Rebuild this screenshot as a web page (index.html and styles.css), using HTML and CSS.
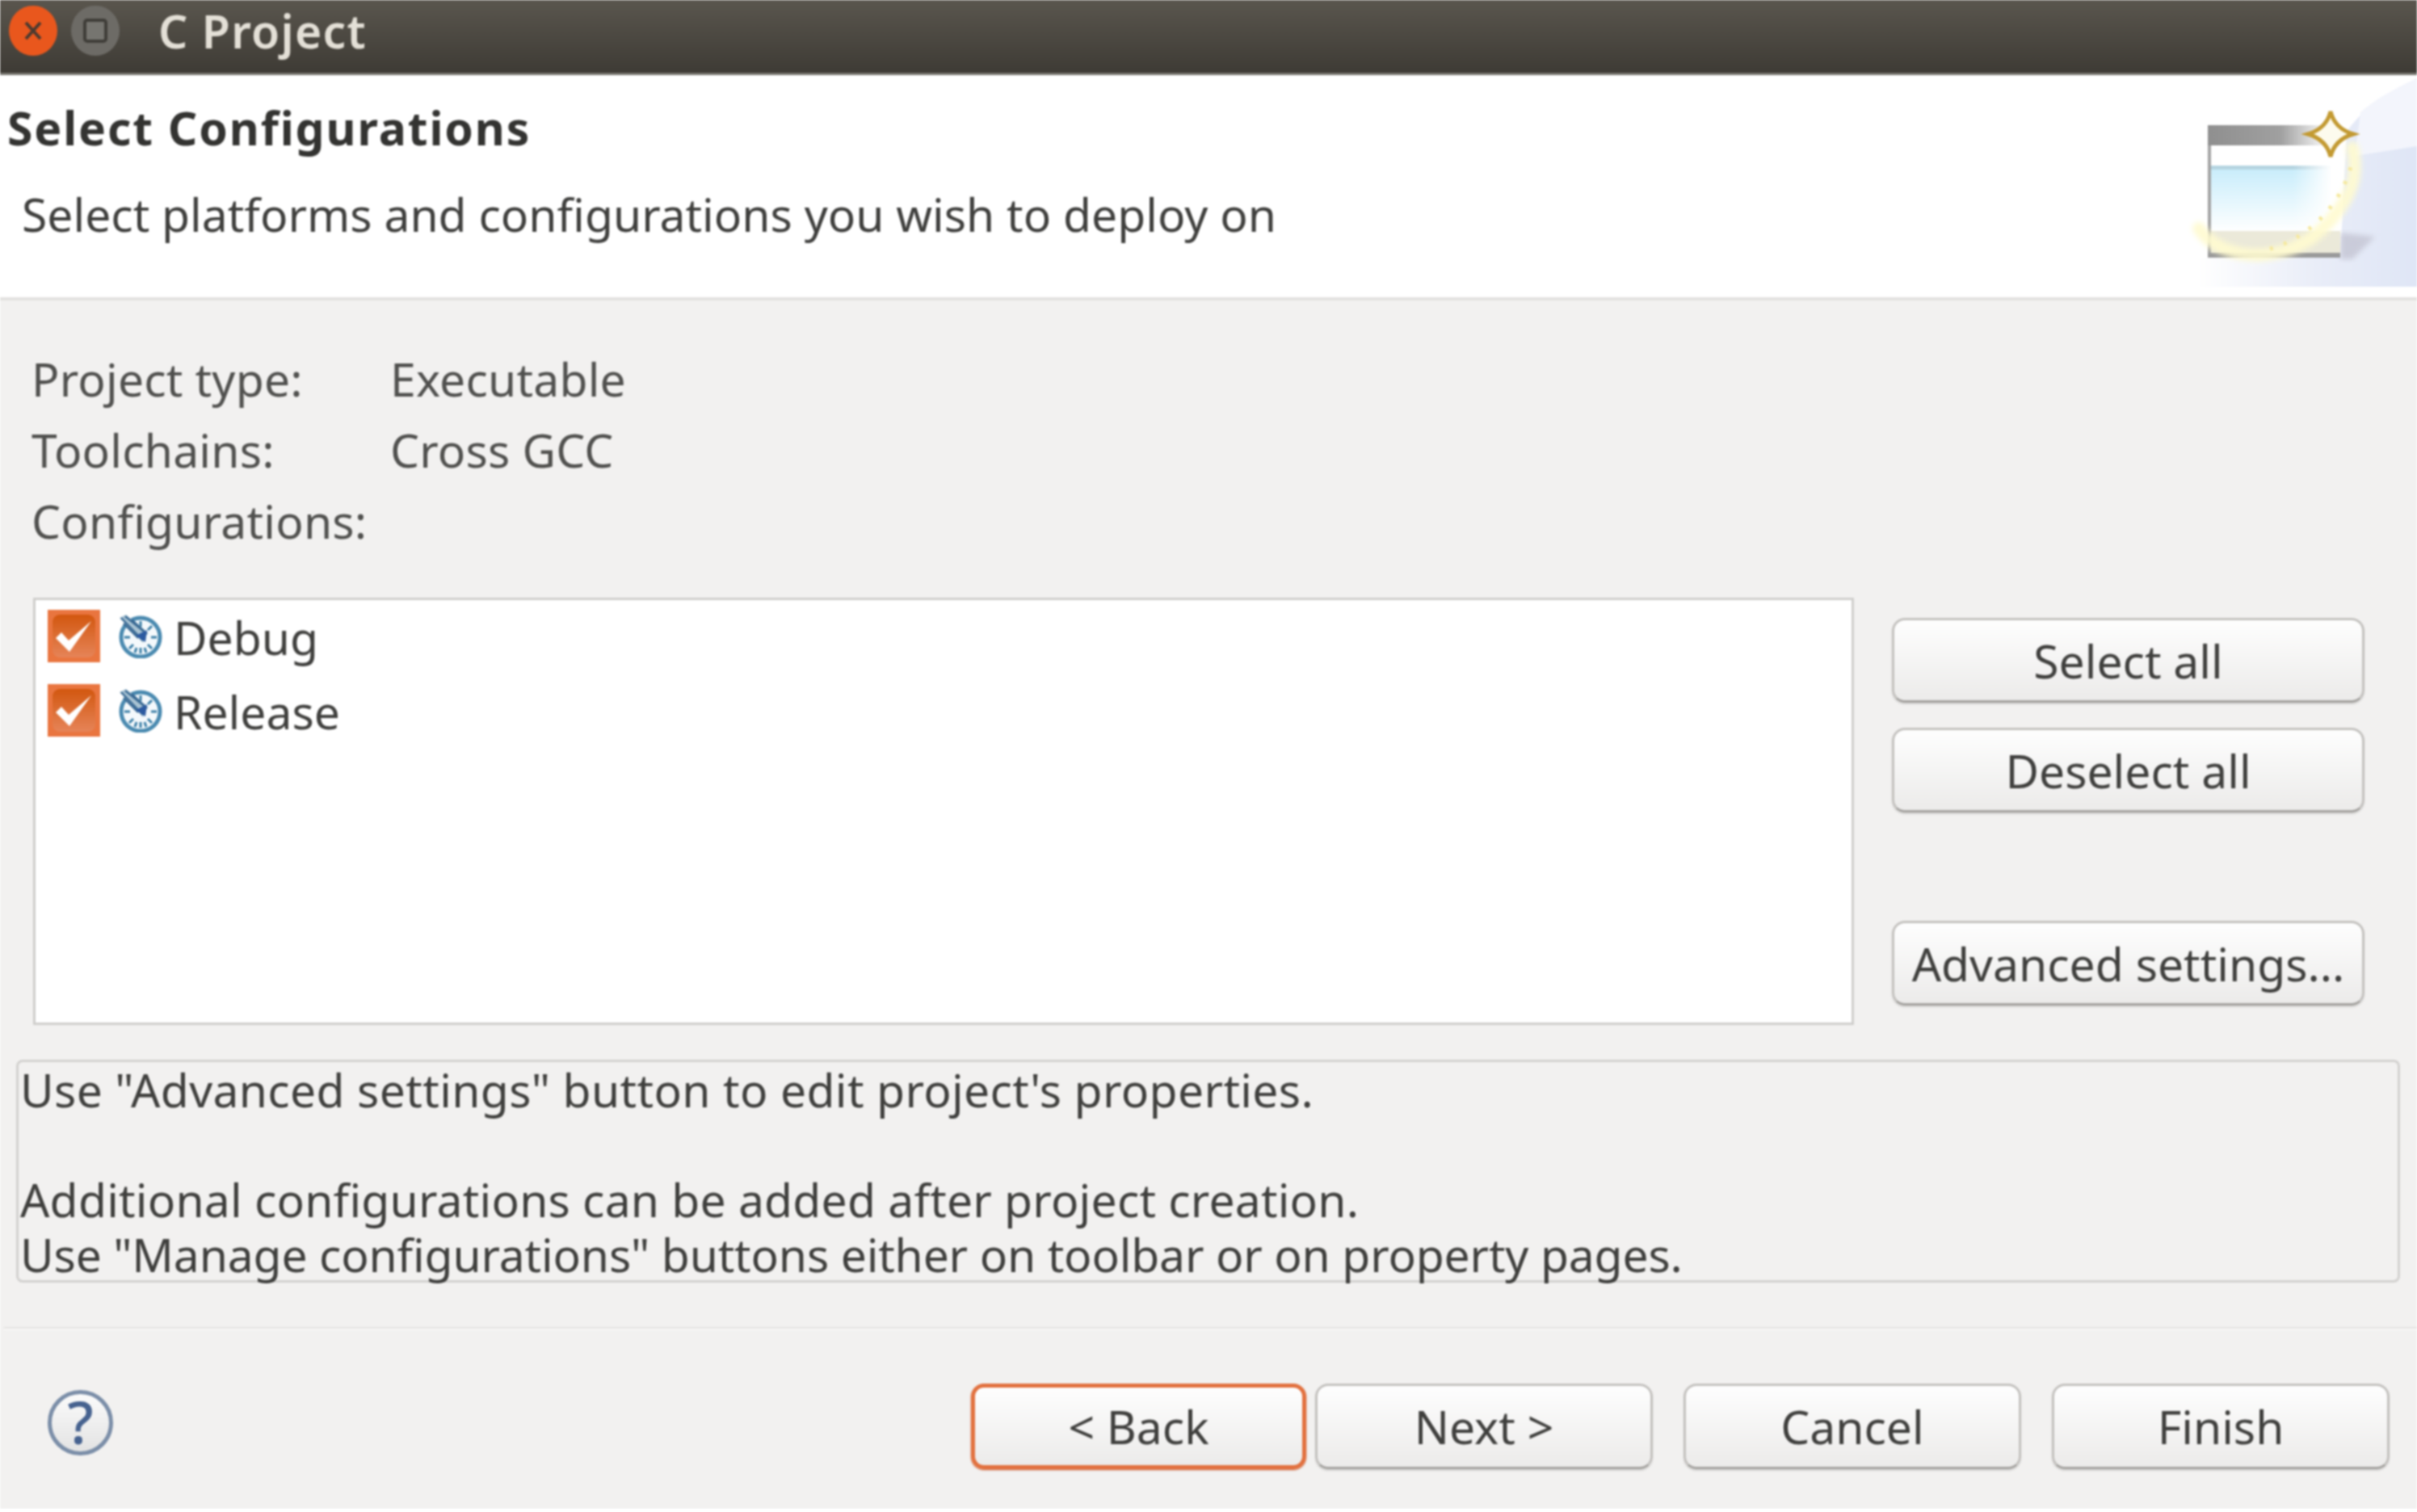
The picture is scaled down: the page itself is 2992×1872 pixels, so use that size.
FILE: index.html
```html
<!DOCTYPE html>
<html lang="en">
<head>
  <meta charset="UTF-8" />
  <title>C Project</title>
  <link rel="stylesheet" href="styles.css">
</head>
<body>
  <svg class="defs" width="0" height="0">
    <symbol id="configIcon" viewBox="0 0 54 54">
      <circle cx="27" cy="28" r="24" fill="#f4f9fc" stroke="#4a8ab0" stroke-width="5"/>
      <path d="M27 8v7M27 41v7M7 28h7M40 28h7M41 14l-5 5M13 42l5-5M41 42l-5-5M20 47l2-6M34 47l-2-6" stroke="#3a7ea6" stroke-width="3"/>
      <path d="M1 4L9 0L36 22L30 35Z" fill="#a9c3d3"/>
      <path d="M3 4L30 32M8 2L35 24M6 11L24 29M16 6L33 22" stroke="#3a6a94" stroke-width="2.4" fill="none"/>
      <path d="M21 26L35 19L33 34Z" fill="#2c5aa0"/>
    </symbol>
    <symbol id="checkIcon" viewBox="0 0 65 65">
      <rect width="65" height="65" fill="#e9753f"/>
      <rect x="6" y="6" width="53" height="53" rx="9" fill="url(#checkFill)"/>
      <path d="M10 35L17 28L26 38L54 14L27 52Z" fill="#fff"/>
    </symbol>
    <linearGradient id="checkFill" x1="0" y1="0" x2="0" y2="1">
      <stop offset="0" stop-color="#d2570f"/>
      <stop offset="1" stop-color="#e68458"/>
    </linearGradient>
  </svg>

  <div class="window">
    <div class="titlebar">
      <svg class="win-btn close" width="60" height="62" viewBox="0 0 60 62">
        <ellipse cx="30" cy="31" rx="30" ry="31" fill="#e9571d"/>
        <path d="M21 21L39 41M39 21L21 41" stroke="#4a3a30" stroke-width="4"/>
      </svg>
      <svg class="win-btn" width="60" height="62" viewBox="0 0 60 62">
        <ellipse cx="30" cy="31" rx="30" ry="31" fill="#6d6b66"/>
        <rect x="17" y="18" width="26" height="26" rx="3" fill="#767570" stroke="#3f3d38" stroke-width="4"/>
      </svg>
      <span class="title">C Project</span>
    </div>

    <div class="banner">
      <div class="banner-text">
        <h2>Select Configurations</h2>
        <p>Select platforms and configurations you wish to deploy on</p>
      </div>
      <svg class="wizard" width="292" height="275" viewBox="0 0 292 275">
        <defs>
          <linearGradient id="sky" x1="0" y1="0" x2="1" y2="0">
            <stop offset="0" stop-color="#fff"/>
            <stop offset="0.55" stop-color="#e9edf8"/>
            <stop offset="1" stop-color="#dfe6f6"/>
          </linearGradient>
          <linearGradient id="winTop" x1="0" y1="0" x2="1" y2="0">
            <stop offset="0" stop-color="#8f8f8f"/>
            <stop offset="0.6" stop-color="#a0a0a0"/>
            <stop offset="1" stop-color="#fff"/>
          </linearGradient>
          <linearGradient id="winBlue" x1="0" y1="0" x2="0" y2="1">
            <stop offset="0" stop-color="#c6ecfb"/>
            <stop offset="1" stop-color="#fff"/>
          </linearGradient>
          <linearGradient id="winFade" x1="0" y1="0" x2="1" y2="0">
            <stop offset="0.65" stop-color="#fff" stop-opacity="0"/>
            <stop offset="0.95" stop-color="#fff"/>
          </linearGradient>
          <filter id="soft"><feGaussianBlur stdDeviation="3"/></filter>
        </defs>
        <path d="M292 4C250 24 225 42 205 70L197 226H20V262H292Z" fill="url(#sky)"/>
        <path d="M292 4C262 18 240 30 222 46L215 100L292 88Z" fill="#f3f5fc"/>
        <path d="M197 195L240 200L212 228H197Z" fill="#bfbfce" opacity="0.7" filter="url(#soft)"/>
        <rect x="33" y="62" width="164" height="164" fill="#fff"/>
        <rect x="33" y="62" width="150" height="25" fill="url(#winTop)"/>
        <rect x="36" y="112" width="158" height="82" fill="url(#winBlue)"/>
        <rect x="36" y="112" width="158" height="5" fill="#a9c4d0" opacity="0.6"/>
        <rect x="36" y="112" width="158" height="82" fill="url(#winFade)"/>
        <rect x="36" y="193" width="161" height="28" fill="#ebe9d9"/>
        <rect x="33" y="87" width="4" height="139" fill="#a3a3a3"/>
        <rect x="33" y="220" width="164" height="6" fill="#9a9a9a"/>
        <path d="M22 190C50 232 130 235 175 190C205 160 222 130 212 90" fill="none" stroke="#fffbd0" stroke-width="16" stroke-linecap="round" opacity="0.9" filter="url(#soft)"/>
        <path d="M110 215C150 205 200 165 212 105" fill="none" stroke="#f6e9a0" stroke-width="5" stroke-dasharray="4 14"/>
        <path d="M185 45Q190 66 213 73Q190 80 185 101Q180 80 157 73Q180 66 185 45Z" fill="#fdfbee" stroke="#c39a32" stroke-width="5"/>
      </svg>
    </div>

    <div class="content">
      <div class="info">
        <span>Project type:</span><span>Executable</span>
        <span>Toolchains:</span><span>Cross GCC</span>
        <span>Configurations:</span><span></span>
      </div>

      <div class="config-row">
        <div class="config-list">
          <div class="config-item">
            <svg class="check" width="65" height="65"><use href="#checkIcon"/></svg>
            <svg class="cfg-icon" width="54" height="54"><use href="#configIcon"/></svg>
            <span class="cfg-name">Debug</span>
          </div>
          <div class="config-item">
            <svg class="check" width="65" height="65"><use href="#checkIcon"/></svg>
            <svg class="cfg-icon" width="54" height="54"><use href="#configIcon"/></svg>
            <span class="cfg-name">Release</span>
          </div>
        </div>
        <div class="side-buttons">
          <button>Select all</button>
          <button>Deselect all</button>
          <button class="advanced">Advanced settings...</button>
        </div>
      </div>

      <div class="note">
        <div class="line-1">Use "Advanced settings" button to edit project's properties.</div>
        <div class="line-2">Additional configurations can be added after project creation.</div>
        <div class="line-3">Use "Manage configurations" buttons either on toolbar or on property pages.</div>
      </div>

      <div class="separator"></div>

      <div class="footer">
        <div class="help">?</div>
        <div class="nav">
          <button class="back">&lt; Back</button>
          <button class="next">Next &gt;</button>
          <button>Cancel</button>
          <button>Finish</button>
        </div>
      </div>
    </div>
  </div>
</body>
</html>
```
FILE: styles.css
```css
* {
  box-sizing: border-box;
}

body {
  margin: 0;
  background: #fff;
  font-family: "Noto Sans", sans-serif;
  font-size: 57px;
  color: #3f3f3d;
}

.defs {
  position: absolute;
}

/* the source shot is an upscaled one, everything is a bit soft */
.window {
  height: 1868px;
  background: #f2f1f0;
  overflow: hidden;
  filter: blur(0.8px);
}

.titlebar {
  height: 93px;
  display: flex;
  align-items: center;
  padding: 0 0 15px 11px;
  gap: 17px;
  background: linear-gradient(#5a564e, #3e3b35);
  border-bottom: 3px solid #77756f;
}

.title {
  margin-left: 31px;
  color: #e4e0d7;
  font-weight: 600;
  letter-spacing: 1.3px;
}

.banner {
  height: 279px;
  display: flex;
  justify-content: space-between;
  background: #fff;
  border-bottom: 4px solid #e3e2e0;
}

.banner-text h2 {
  margin: 29px 0 0 9px;
  font-size: 57px;
  font-weight: 700;
  letter-spacing: 1.9px;
  line-height: 72px;
  color: #333331;
}

.banner-text p {
  margin: 35px 0 0 27px;
  line-height: 72px;
}

.content {
  padding-top: 53px;
}

.info {
  display: grid;
  grid-template-columns: 444px auto;
  grid-auto-rows: 88px;
  align-items: center;
  padding-left: 39px;
  color: #50504e;
  letter-spacing: 0.2px;
}

.config-row {
  display: flex;
  gap: 47px;
  margin: 51px 0 0 41px;
}

.config-list {
  width: 2254px;
  height: 529px;
  display: flex;
  flex-direction: column;
  gap: 27px;
  padding: 12px 0 0 15px;
  background: #fff;
  border: 3px solid #cfcecc;
}

.config-item {
  height: 65px;
  display: flex;
  align-items: center;
}

.check {
  flex: none;
}

.cfg-icon {
  flex: none;
  margin: 0 14px 0 23px;
}

.cfg-name {
  margin-top: 4px;
  line-height: 61px;
}

.side-buttons {
  width: 585px;
  display: flex;
  flex-direction: column;
  gap: 31px;
  padding-top: 25px;
}

button {
  height: 105px;
  padding: 0;
  font: inherit;
  color: #3f3f3d;
  background: linear-gradient(#fefefe, #ecebea);
  border: 3px solid #c4c2bf;
  border-bottom-color: #a5a3a0;
  border-radius: 16px;
  box-shadow: 0 2px 2px rgba(0, 0, 0, 0.12);
}

.side-buttons .advanced {
  margin-top: 103px;
}

.note {
  width: 2951px;
  height: 276px;
  margin: 43px 0 0 20px;
  padding-left: 2px;
  line-height: 68px;
  border: 3px solid #d3d2d0;
  border-radius: 8px;
  white-space: nowrap;
}

.line-1 {
  margin-bottom: 68px;
  letter-spacing: 0.35px;
}

.line-2 {
  letter-spacing: 0.2px;
}

.line-3 {
  letter-spacing: -0.17px;
}

.separator {
  height: 4px;
  margin: 55px 0 0 5px;
  background: #e4e3e1;
  border-bottom: 2px solid #f8f8f7;
}

.footer {
  display: flex;
  justify-content: space-between;
  padding: 66px 34px 0 59px;
}

.help {
  width: 81px;
  height: 81px;
  margin-top: 8px;
  text-align: center;
  font-size: 72px;
  font-weight: 500;
  line-height: 68px;
  color: #46628f;
  background: linear-gradient(#fbfbfb, #e3e3e3);
  border: 5px solid #7b8ea8;
  border-radius: 50%;
}

.nav {
  display: flex;
  gap: 38px;
}

.nav button {
  width: 418px;
  height: 106px;
}

.nav .back {
  width: 415px;
  border: 5px solid #e2713f;
  box-shadow: 0 1px 2px #c9582a;
}

.nav .next {
  margin-left: -27px;
}
```
